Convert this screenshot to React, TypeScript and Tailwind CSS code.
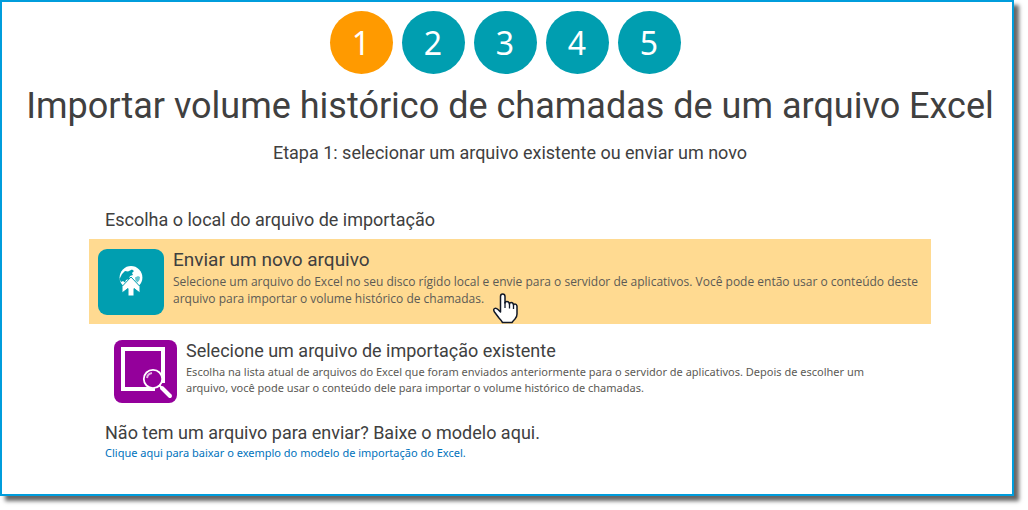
import clsx from 'clsx';
import type { ReactNode } from 'react';

const STEPS = [1, 2, 3, 4, 5];
const CURRENT_STEP = 1;

function UploadIcon() {
  return (
    <svg viewBox="0 0 66 66" className="size-[66px] shrink-0" aria-hidden="true">
      <rect width="66" height="66" rx="9" fill="#009eb0" />
      <circle cx="33" cy="28.5" r="11.4" fill="#fff" />
      <path
        d="M24 25l3-3 3 .5 4-2 2 1.500-2 2 1 2-3 1-1 3-3 1-1 2.500-2-1.500-2 1-1.500-3z"
        fill="#009eb0"
      />
      <path d="M37 28.500l3-1.500 2 1-.5 3-2 2.500-2-2z" fill="#009eb0" opacity=".6" />
      <path
        d="M33 28l9 9.500v6.500l-6-4.500V47h-6v-7.500L24 44v-6.500z"
        fill="#fff"
        stroke="#009eb0"
        strokeWidth="1"
      />
    </svg>
  );
}

function BrowseIcon() {
  return (
    <svg viewBox="0 0 63 63" className="size-[63px] shrink-0" aria-hidden="true">
      <rect width="63" height="63" rx="8" fill="#94009b" />
      <path d="M41 49H9V9h40v34" fill="none" stroke="#fff" strokeWidth="4" />
      <circle cx="39" cy="39" r="9.2" fill="#94009b" stroke="#fff" strokeWidth="1.8" />
      <path d="M33 38a6 6 0 0 1 5-5" fill="none" stroke="#e3b5e6" strokeWidth="2" />
      <path d="M45 45l3 3" stroke="#fff" strokeWidth="2" />
      <path d="M48 48l8 8" stroke="#fff" strokeWidth="4" strokeLinecap="round" />
    </svg>
  );
}

function HandPointer() {
  return (
    <svg
      viewBox="0 0 25 31"
      className="absolute top-[54px] left-[404px] h-[31px] w-[25px]"
      aria-hidden="true"
    >
      <path
        d="M7.5 17V3.5Q7.5 1 9.7 1T12 3.5V10q0-1.500 2-1.500T16.500 11q0-1.500 1.800-1.500T20.500 12q0-1 1.500-1t2 2v8q0 3-2 5t-3 3.500H9.500Q8 27 6 25L1.500 19Q0 16.500 1.500 15.500T5 16.500L7.500 19z"
        fill="#fff"
        stroke="#111827"
        strokeWidth="1.5"
        strokeLinejoin="round"
      />
      <path d="M12 9v6M16.5 11v4.5M20.5 12v4" stroke="#111827" strokeWidth="1.3" />
    </svg>
  );
}

interface OptionTextProps {
  title: string;
  large?: boolean;
  children: ReactNode;
}

function OptionText({ title, large = false, children }: Readonly<OptionTextProps>) {
  return (
    <span className="block">
      <span className={clsx('block leading-[22px]', large ? 'text-[19px]' : 'text-lg')}>
        {title}
      </span>
      <span
        className={clsx(
          'mt-[2px] block text-[#5c5a55]',
          large
            ? "font-['Open_Sans',sans-serif] text-xs leading-[17px]"
            : "font-['Noto_Sans',sans-serif] text-[11px] leading-4"
        )}
      >
        {children}
      </span>
    </span>
  );
}

export default function App() {
  return (
    <div className="bg-white pr-[14px] pb-[14px] font-['Roboto',sans-serif] text-[#404040]">
      <main className="border-2 border-[#009ddc] px-2 pt-[9px] pb-[33px] shadow-[5px_5px_4px_rgba(0,0,0,0.6)]">
        <ol className="flex justify-center gap-[9px] pr-1">
          {STEPS.map(step => (
            <li
              key={step}
              className={clsx(
                "flex size-[63px] items-center justify-center rounded-full font-['Noto_Sans',sans-serif] text-[32px] text-white",
                step === CURRENT_STEP ? 'bg-[#ff9a00]' : 'bg-[#009eb0]'
              )}
            >
              {step}
            </li>
          ))}
        </ol>

        <div className="pl-[6px] text-center">
          <h1 className="mt-2 text-4xl leading-[48px] whitespace-nowrap">
            Importar volume histórico de chamadas de um arquivo Excel
          </h1>
          <p className="mt-[11px] text-lg leading-6">
            Etapa 1: selecionar um arquivo existente ou enviar um novo
          </p>
        </div>

        <section className="mt-[43px] pr-[73px] pl-[79px]">
          <h2 className="pl-4 text-lg leading-6">Escolha o local do arquivo de importação</h2>

          <button
            type="button"
            className="relative mt-[7px] flex w-full cursor-pointer gap-[9px] bg-[#ffda91] pt-[10px] pb-[9px] pl-[9px] text-left"
          >
            <UploadIcon />
            <OptionText title="Enviar um novo arquivo" large>
              Selecione um arquivo do Excel no seu disco rígido local e envie para o servidor de
              aplicativos. Você pode então usar o conteúdo deste
              <br />
              arquivo para importar o volume histórico de chamadas.
            </OptionText>
            <HandPointer />
          </button>

          <button
            type="button"
            className="mt-4 flex w-full cursor-pointer gap-[9px] pl-[25px] text-left"
          >
            <BrowseIcon />
            <OptionText title="Selecione um arquivo de importação existente">
              Escolha na lista atual de arquivos do Excel que foram enviados anteriormente para o
              servidor de aplicativos. Depois de escolher um
              <br />
              arquivo, você pode usar o conteúdo dele para importar o volume histórico de chamadas.
            </OptionText>
          </button>

          <div className="mt-[18px] pl-4">
            <h2 className="text-lg leading-6">Não tem um arquivo para enviar? Baixe o modelo aqui.</h2>
            <a
              href="#modelo"
              className="block font-['Noto_Sans',sans-serif] text-[11px] leading-4 text-[#0072bc]"
            >
              Clique aqui para baixar o exemplo do modelo de importação do Excel.
            </a>
          </div>
        </section>
      </main>
    </div>
  );
}
